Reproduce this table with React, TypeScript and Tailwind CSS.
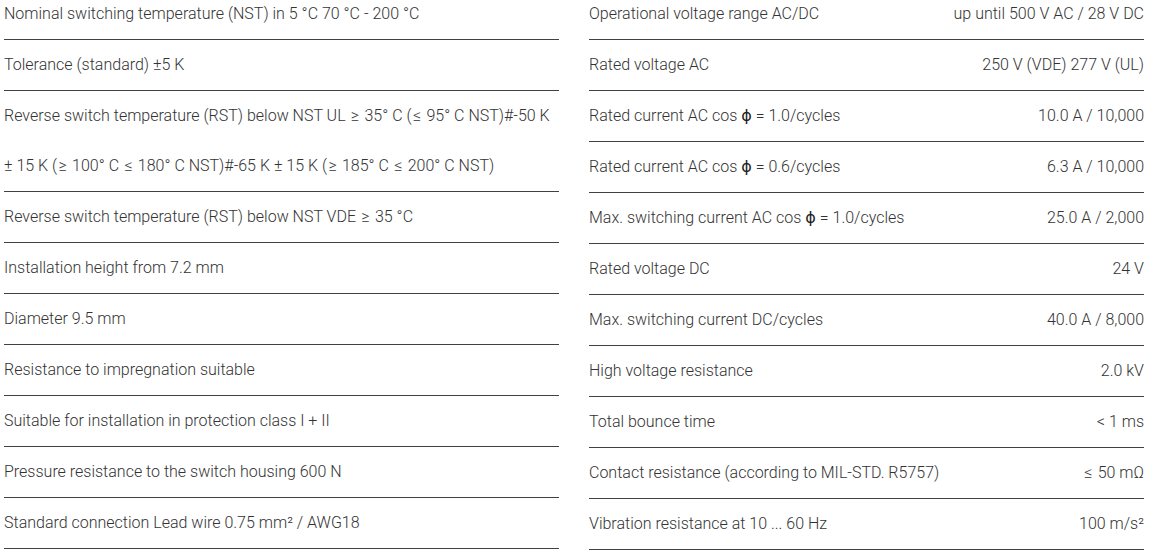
const left: string[][] = [
  ["Nominal switching temperature (NST) in 5 °C 70 °C - 200 °C"],
  ["Tolerance (standard) ±5 K"],
  [
    "Reverse switch temperature (RST) below NST UL ≥ 35° C (≤ 95° C NST)#-50 K",
    "± 15 K (≥ 100° C ≤ 180° C NST)#-65 K ± 15 K (≥ 185° C ≤ 200° C NST)",
  ],
  ["Reverse switch temperature (RST) below NST VDE ≥ 35 °C"],
  ["Installation height from 7.2 mm"],
  ["Diameter 9.5 mm"],
  ["Resistance to impregnation suitable"],
  ["Suitable for installation in protection class I + II"],
  ["Pressure resistance to the switch housing 600 N"],
  ["Standard connection Lead wire 0.75 mm² / AWG18"],
];

const right: { label: React.ReactNode; value: string }[] = [
  { label: "Operational voltage range AC/DC", value: "up until 500 V AC / 28 V DC" },
  { label: "Rated voltage AC", value: "250 V (VDE) 277 V (UL)" },
  { label: <Phi pre="Rated current AC cos " post=" = 1.0/cycles" />, value: "10.0 A / 10,000" },
  { label: <Phi pre="Rated current AC cos " post=" = 0.6/cycles" />, value: "6.3 A / 10,000" },
  { label: <Phi pre="Max. switching current AC cos " post=" = 1.0/cycles" />, value: "25.0 A / 2,000" },
  { label: "Rated voltage DC", value: "24 V" },
  { label: "Max. switching current DC/cycles", value: "40.0 A / 8,000" },
  { label: "High voltage resistance", value: "2.0 kV" },
  { label: "Total bounce time", value: "< 1 ms" },
  { label: "Contact resistance (according to MIL-STD. R5757)", value: "≤ 50 mΩ" },
  { label: "Vibration resistance at 10 ... 60 Hz", value: "100 m/s²" },
];

function Phi({ pre, post }: { pre: string; post: string }) {
  return (
    <>
      {pre}
      <span className="font-normal text-[#222] font-['DejaVu_Sans',sans-serif]">ϕ</span>
      {post}
    </>
  );
}

// ≥ / ≤ sit a little wider in the original rendering
function Txt({ s }: { s: string }) {
  return (
    <>
      {s.split(/([≥≤])/).map((p, i) =>
        p === "≥" || p === "≤" ? (
          <span key={i} className="mx-[1.4px]">
            {p}
          </span>
        ) : (
          p
        )
      )}
    </>
  );
}

export default function App() {
  return (
    <div className="w-[1150px] h-[557px] overflow-hidden bg-white">
      <div className="-mt-[11px] grid grid-cols-2 gap-x-[30px] pl-[4px] pr-[6px] items-start font-['Roboto',sans-serif] text-[16px] leading-[50px] font-light text-[#333333]">
        {/* ── Left column ── */}
        <div className="flex flex-col">
          {left.map((lines, i) => (
            <div key={i} className="border-b border-[#3d4442]">
              {lines.map((l) => (
                <div key={l} className="whitespace-nowrap">
                  <Txt s={l} />
                </div>
              ))}
            </div>
          ))}
        </div>

        {/* ── Right column ── */}
        <div className="flex flex-col">
          {right.map((r) => (
            <div
              key={r.value}
              className="flex justify-between border-b border-[#3d4442] whitespace-nowrap"
            >
              <span>{r.label}</span>
              <span>
                <Txt s={r.value} />
              </span>
            </div>
          ))}
        </div>
      </div>
    </div>
  );
}
